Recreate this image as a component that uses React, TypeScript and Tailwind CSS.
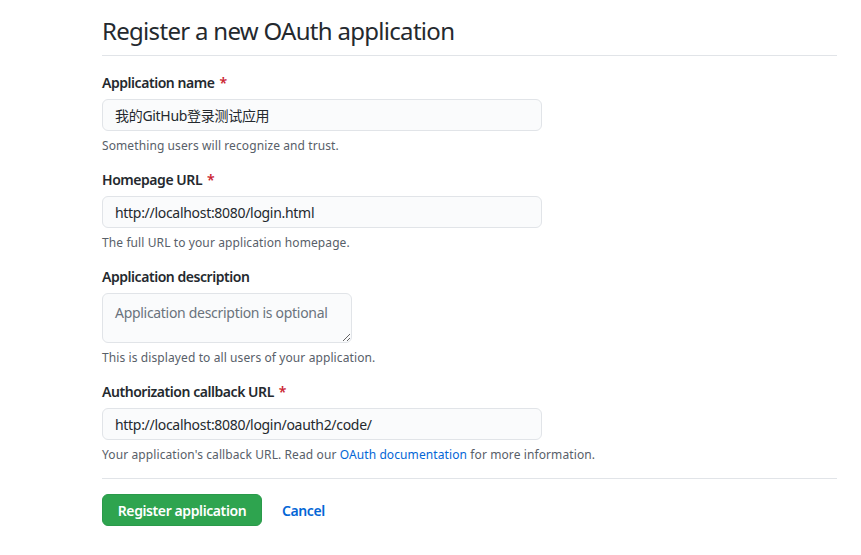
import React from 'react'

// ---------------------------------------------------------------------------
// Form field pieces
// ---------------------------------------------------------------------------

function Label({ children, required }: { children: React.ReactNode; required?: boolean }) {
  return (
    <label className="block text-[14px] font-semibold leading-[21px] tracking-[-0.45px] text-[#24292e] mb-[6px]">
      {children}
      {required && <span className="text-[#cb2431] ml-[5px]">*</span>}
    </label>
  )
}

function Note({ children }: { children: React.ReactNode }) {
  return (
    <p className="mt-[6px] text-[12px] leading-[18px] tracking-[0.1px] text-[#586069]">{children}</p>
  )
}

const inputCls =
  'block w-[440px] h-[32px] rounded-[6px] border border-[#e1e4e8] bg-[#fafbfc] px-[12px] text-[14px] tracking-[-0.3px] text-[#24292e] outline-none'

export default function App() {
  return (
    <div
      className="min-h-[555px] bg-white"
      style={{ fontFamily: '"Noto Sans", "Noto Sans CJK SC", sans-serif' }}
    >
      <div className="ml-[102px] w-[735px]">
        {/* Header */}
        <div className="pt-[13px] pb-[6px] border-b border-[#e1e4e8]">
          <h1 className="text-[24px] leading-[36px] font-normal tracking-[-0.7px] text-[#24292e]">
            Register a new OAuth application
          </h1>
        </div>

        <form className="pt-[16px]">
          <div className="mb-[14px]">
            <Label required>Application name</Label>
            <input className={inputCls} defaultValue="我的GitHub登录测试应用" />
            <Note>Something users will recognize and trust.</Note>
          </div>

          <div className="mb-[14px]">
            <Label required>Homepage URL</Label>
            <input className={inputCls} defaultValue="http://localhost:8080/login.html" />
            <Note>The full URL to your application homepage.</Note>
          </div>

          <div className="mb-[14px]">
            <Label>Application description</Label>
            <textarea
              className="block w-[250px] h-[50px] rounded-[6px] border border-[#e1e4e8] bg-[#fafbfc] px-[12px] py-[9px] text-[14px] leading-[20px] tracking-[-0.3px] text-[#24292e] placeholder:text-[#6a737d] outline-none"
              placeholder="Application description is optional"
            />
            <Note>This is displayed to all users of your application.</Note>
          </div>

          <div className="mb-[14px]">
            <Label required>Authorization callback URL</Label>
            <input className={inputCls} defaultValue="http://localhost:8080/login/oauth2/code/" />
            <Note>
              Your application's callback URL. Read our{' '}
              <a href="#" className="text-[#0366d6]">
                OAuth documentation
              </a>{' '}
              for more information.
            </Note>
          </div>

          <div className="border-t border-[#e1e4e8] pt-[15px] flex items-center gap-[20px]">
            <button
              type="button"
              className="w-[160px] h-[32px] rounded-[6px] bg-[#2ea44f] border border-[#2a9a4a] text-white text-[14px] font-semibold tracking-[-0.4px]"
            >
              Register application
            </button>
            <a href="#" className="text-[14px] font-semibold tracking-[-0.4px] text-[#0366d6]">
              Cancel
            </a>
          </div>
        </form>
      </div>
    </div>
  )
}
